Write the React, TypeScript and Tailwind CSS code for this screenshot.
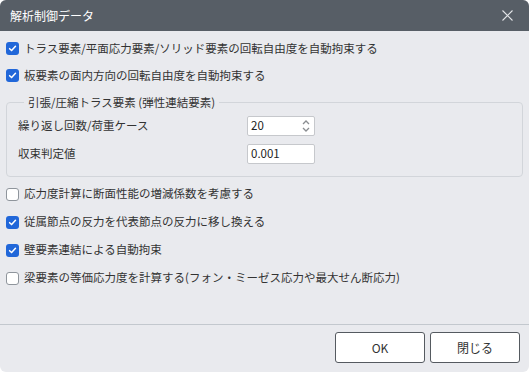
import React from "react";

const font = { fontFamily: '"Noto Sans CJK JP", "Noto Sans", sans-serif' };

function Box({ checked }: { checked: boolean }) {
  if (checked) {
    return (
      <span className="flex h-[13px] w-[13px] shrink-0 items-center justify-center rounded-[3px] bg-[#2167d9]">
        <svg width="9" height="9" viewBox="0 0 10 10">
          <path d="M1.8 5.2 L4 7.3 L8.3 2.6" fill="none" stroke="#fff" strokeWidth="1.7" strokeLinecap="round" strokeLinejoin="round" />
        </svg>
      </span>
    );
  }
  return <span className="h-[13px] w-[13px] shrink-0 rounded-[3px] border border-[#8f959c] bg-white" />;
}

function Row({ checked, label, tall }: { checked: boolean; label: string; tall?: boolean }) {
  return (
    <div className={tall ? "flex h-[28px] items-center gap-[5px] pl-[6px]" : "flex h-[27px] items-center gap-[5px] pl-[6px]"}>
      <Box checked={checked} />
      <span className="text-[11.5px] leading-none text-[#333]">{label}</span>
    </div>
  );
}

export default function App() {
  return (
    <div className="bg-white" style={font}>
      <div className="flex h-[372px] w-[529px] flex-col overflow-hidden rounded-[6px] bg-[#e9eaee]">
        <div className="flex h-[31px] shrink-0 items-center justify-between bg-[#575e66] pl-[10px] pr-[16px]">
          <span className="text-[12px] leading-none text-white">解析制御データ</span>
          <svg width="11" height="11" viewBox="0 0 11 11">
            <path d="M0.5 0.5 L10.5 10.5 M10.5 0.5 L0.5 10.5" stroke="#e2e4e7" strokeWidth="1.1" />
          </svg>
        </div>
        <div className="flex flex-1 flex-col pt-[4px]">
          <Row checked label="トラス要素/平面応力要素/ソリッド要素の回転自由度を自動拘束する" />
          <Row checked label="板要素の面内方向の回転自由度を自動拘束する" />
          <fieldset className="mx-[6px] mt-[5px] rounded-[4px] border border-[#d2d5da] pb-[8px] pl-[11px]">
            <legend className="ml-[6px] px-[4px] text-[11.5px] leading-[16px] text-[#333]">
              引張/圧縮トラス要素 (弾性連結要素)
            </legend>
            <div className="grid grid-cols-[229px_68px] items-center pt-[2px]">
              <div className="flex h-[28px] items-center text-[11.5px] text-[#333]">繰り返し回数/荷重ケース</div>
              <div className="flex h-[20px] items-center justify-between rounded-[2px] border border-[#c6c8cc] bg-white pl-[3px] pr-[4px] text-[11.5px] text-[#222]">
                <span>20</span>
                <svg width="8" height="14" viewBox="0 0 8 14">
                  <path d="M1 5 L4 2 L7 5 M1 9 L4 12 L7 9" fill="none" stroke="#8a8d91" strokeWidth="1.3" />
                </svg>
              </div>
              <div className="flex h-[28px] items-center text-[11.5px] text-[#333]">収束判定値</div>
              <div className="flex h-[20px] items-center rounded-[2px] border border-[#c6c8cc] bg-white pl-[3px] text-[11.5px] text-[#222]">
                0.001
              </div>
            </div>
          </fieldset>
          <div className="mt-[3px]">
            <Row tall checked={false} label="応力度計算に断面性能の増減係数を考慮する" />
            <Row tall checked label="従属節点の反力を代表節点の反力に移し換える" />
            <Row tall checked label="壁要素連結による自動拘束" />
            <Row tall checked={false} label="梁要素の等価応力度を計算する(フォン・ミーゼス応力や最大せん断応力)" />
          </div>
        </div>
        <div className="flex h-[48px] shrink-0 items-start justify-end gap-[5px] border-t border-[#c3c8ce] pr-[9px] pt-[7px]">
          <button className="h-[31px] w-[90px] rounded-[3px] border border-[#555a60] bg-white text-[12px] text-[#333]">OK</button>
          <button className="h-[31px] w-[90px] rounded-[3px] border border-[#555a60] bg-white text-[12px] text-[#333]">閉じる</button>
        </div>
      </div>
    </div>
  );
}
